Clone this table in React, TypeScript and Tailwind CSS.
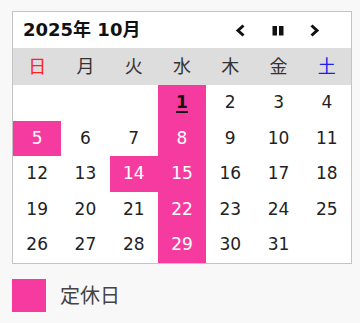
import React from "react";

const PINK = "bg-[#f63ba0]";
const holidays = new Set([1, 5, 8, 14, 15, 22, 29]);

export default function App() {
  const cells: (number | null)[] = [null, null, null];
  for (let d = 1; d <= 31; d++) cells.push(d);
  while (cells.length < 35) cells.push(null);

  const week = [
    { t: "日", c: "text-[#ff2020]" },
    { t: "月", c: "text-[#333]" },
    { t: "火", c: "text-[#333]" },
    { t: "水", c: "text-[#333]" },
    { t: "木", c: "text-[#333]" },
    { t: "金", c: "text-[#333]" },
    { t: "土", c: "text-[#2020ee]" },
  ];

  return (
    <div
      className="w-[360px] h-[323px] bg-[#f8f8f8] pt-[11px] pl-[12px]"
      style={{ fontFamily: '"DejaVu Sans", "Noto Sans CJK JP", sans-serif' }}
    >
      <div className="w-[340px] border border-[#c4c4c4] bg-white">
        <div className="h-[36px] flex items-center justify-between">
          <div className="pl-[10px] text-[18px] font-bold text-[#111] leading-none">
            2025年 10月
          </div>
          <div className="flex items-center pr-[18px]">
            <div className="w-[37px] h-[36px] flex items-center justify-center">
              <svg width="11" height="13" viewBox="0 0 11 13">
                <polyline points="8.5,1.5 3,6.5 8.5,11.5" fill="none" stroke="#111" strokeWidth="3" />
              </svg>
            </div>
            <div className="w-[37px] h-[36px] flex items-center justify-center">
              <svg width="12" height="11" viewBox="0 0 12 11">
                <rect x="0.5" y="1" width="4.5" height="9.5" fill="#111" />
                <rect x="7" y="1" width="4.5" height="9.5" fill="#111" />
              </svg>
            </div>
            <div className="w-[37px] h-[36px] flex items-center justify-center">
              <svg width="11" height="13" viewBox="0 0 11 13">
                <polyline points="2.5,1.5 8,6.5 2.5,11.5" fill="none" stroke="#111" strokeWidth="3" />
              </svg>
            </div>
          </div>
        </div>
        <div className="h-[37px] grid grid-cols-7 bg-[#dddddd]">
          {week.map((w) => (
            <div key={w.t} className={`flex items-center justify-center text-[18px] ${w.c}`}>
              {w.t}
            </div>
          ))}
        </div>
        <div className="h-[178px] grid grid-cols-7 grid-rows-5">
          {cells.map((d, i) => {
            const hol = d !== null && holidays.has(d);
            const today = d === 1;
            return (
              <div
                key={i}
                className={`flex items-center justify-center text-[17px] ${
                  hol ? `${PINK} ${today ? "text-[#111] font-bold" : "text-white"}` : "text-[#222]"
                }`}
              >
                {d !== null && (
                  <span className={today ? "underline underline-offset-[3px] decoration-[1.5px]" : ""}>{d}</span>
                )}
              </div>
            );
          })}
        </div>
      </div>
      <div className="mt-[15px] flex items-center">
        <div className={`w-[34px] h-[33px] ${PINK}`} />
        <div className="ml-[14px] text-[20px] text-[#444]">定休日</div>
      </div>
    </div>
  );
}
